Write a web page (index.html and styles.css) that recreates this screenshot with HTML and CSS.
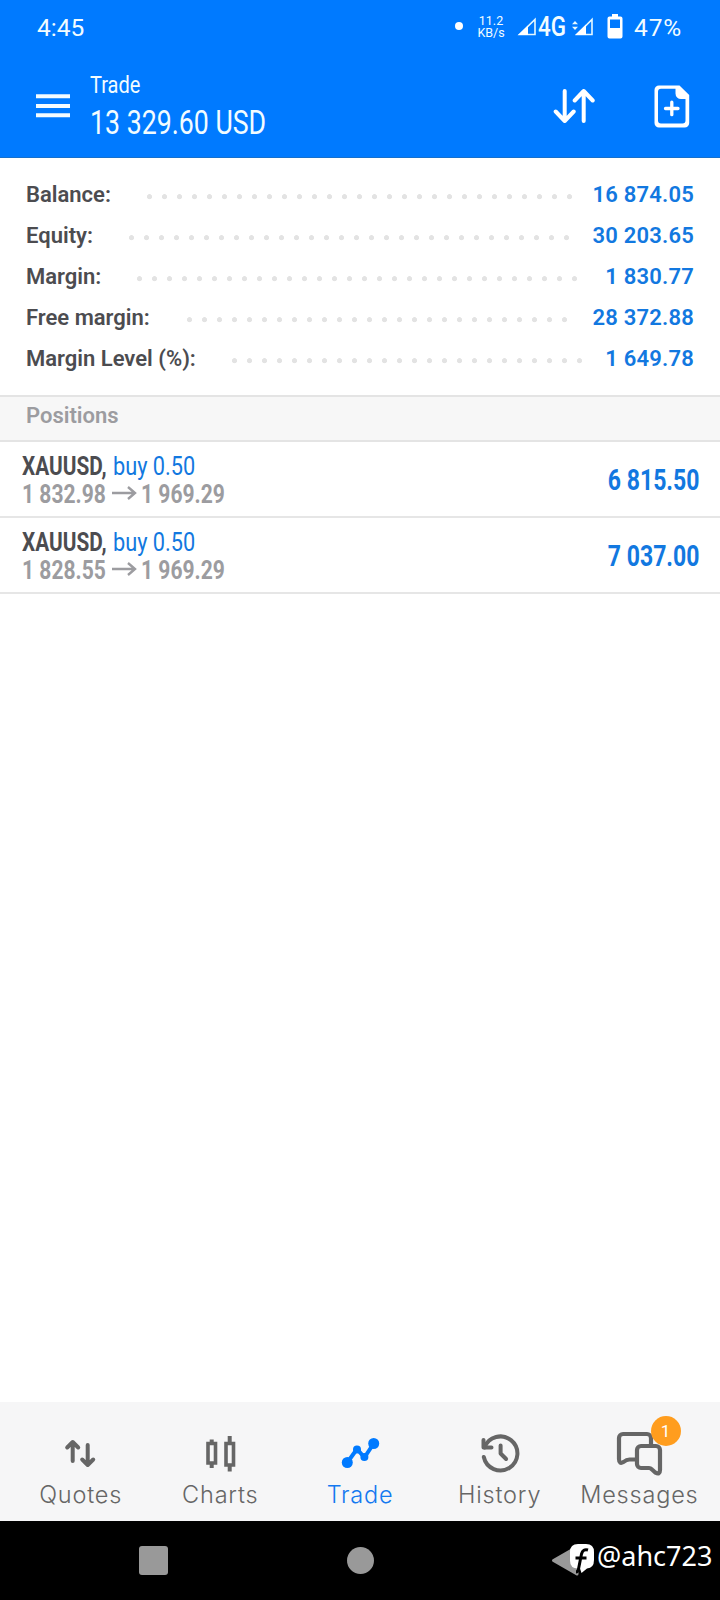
FILE: index.html
```
<!DOCTYPE html>
<html lang="en">
<head>
<meta charset="utf-8">
<title>Trade</title>
<link rel="stylesheet" href="styles.css">
</head>
<body>
<div class="screen">
  <header class="top">
    <div class="status">
      <span class="clock">4:45</span>
      <span class="dot"></span>
      <span class="rate"><span>11.2</span><span>KB/s</span></span>
      <svg class="signal" width="20" height="20" viewBox="0 0 20 20"><path d="M2.5 17.500 18 2.500v15z" fill="none" stroke="#e4f8ff" stroke-width="1.600"/><path d="M1 18 11 8.500V18z" fill="#fff"/></svg>
      <span class="net">4G</span>
      <svg class="signal2" width="22" height="20" viewBox="0 0 22 20"><path d="M0 7.300 3 4l3 3.300zM0 9.700 3 13l3-3.300z" fill="#e4f8ff"/><path d="M5 17.500 20 2.500v15z" fill="none" stroke="#e4f8ff" stroke-width="1.600"/><path d="M3 18 14 7.500V18z" fill="#fff"/></svg>
      <svg class="battery" width="16" height="25" viewBox="0 0 16 25"><path d="M5 0h6v2.500h2.500a2 2 0 0 1 2 2V22.500a2 2 0 0 1-2 2h-11a2 2 0 0 1-2-2V4.500a2 2 0 0 1 2-2H5z" fill="#fff"/><path d="M3 5.500h10v8.500H3z" fill="#007aff"/></svg>
      <span class="percent">47%</span>
    </div>
    <div class="bar">
      <svg class="menu" width="34" height="24" viewBox="0 0 34 24"><path d="M0 2.200h34M0 11.900h34M0 21.200h34" stroke="#f4fcff" stroke-width="4"/></svg>
      <div class="heading"><span class="title">Trade</span><span class="amount">13 329.60 USD</span></div>
      <svg class="sort" width="42" height="36" viewBox="0 0 42 36" fill="none" stroke="#fff" stroke-width="4" stroke-linecap="round" stroke-linejoin="round"><path d="M11.700 3v30M2.700 23.500l9 9.500 9-9.500M30.700 33V3M21.700 12.500l9-9.500 9 9.500"/></svg>
      <svg class="new-order" width="36" height="43" viewBox="0 0 36 43"><path fill-rule="evenodd" fill="#fff" d="M5 .5H25.500L35.200 10V38a4.500 4.500 0 0 1-4.500 4.500H5A4.500 4.500 0 0 1 .5 38V5A4.500 4.500 0 0 1 5 .5zM7 3.800A3 3 0 0 0 4 6.800V35.500a3 3 0 0 0 3 3H28.500a3 3 0 0 0 3-3V14H27A5.500 5.500 0 0 1 21.500 8.500V3.800z"/><path d="M17.800 17.200v12.500M11.500 23.500h12.500" stroke="#fff" stroke-width="3.300" stroke-linecap="round"/></svg>
    </div>
  </header>

  <section class="summary">
    <div class="row"><span class="label" style="width:116px">Balance:</span><span class="leader" style="width:435px"></span><span class="value">16 874.05</span></div>
    <div class="row"><span class="label" style="width:98px">Equity:</span><span class="leader" style="width:450px"></span><span class="value">30 203.65</span></div>
    <div class="row"><span class="label" style="width:106px">Margin:</span><span class="leader" style="width:450px"></span><span class="value">1 830.77</span></div>
    <div class="row"><span class="label" style="width:156px">Free margin:</span><span class="leader" style="width:390px"></span><span class="value">28 372.88</span></div>
    <div class="row"><span class="label" style="width:201px">Margin Level (%):</span><span class="leader" style="width:360px"></span><span class="value">1 649.78</span></div>
  </section>

  <h2 class="section">Positions</h2>
  <main class="positions">
    <article class="position">
      <div class="deal">
        <div class="line"><span class="symbol">XAUUSD,</span><span class="side">buy 0.50</span></div>
        <div class="line"><span class="price">1 832.98</span><svg class="arrow" width="25" height="14" viewBox="0 0 25 14"><path d="M0 7h23M16 1l7 6-7 6" fill="none" stroke="#9c9ca0" stroke-width="2.400"/></svg><span class="price">1 969.29</span></div>
      </div>
      <span class="profit">6 815.50</span>
    </article>
    <article class="position">
      <div class="deal">
        <div class="line"><span class="symbol">XAUUSD,</span><span class="side">buy 0.50</span></div>
        <div class="line"><span class="price">1 828.55</span><svg class="arrow" width="25" height="14" viewBox="0 0 25 14"><path d="M0 7h23M16 1l7 6-7 6" fill="none" stroke="#9c9ca0" stroke-width="2.400"/></svg><span class="price">1 969.29</span></div>
      </div>
      <span class="profit">7 037.00</span>
    </article>
  </main>

  <nav class="tabs">
    <a class="tab"><svg width="48" height="48" viewBox="0 0 48 48" fill="none" stroke="#666" stroke-width="4" stroke-linecap="round" stroke-linejoin="round"><path d="M15.700 33V14M10.200 19.500 15.700 14l5.500 5.500M30.700 17v19M25.200 31.500 30.700 37l5.500-5.500"/></svg><span>Quotes</span></a>
    <a class="tab"><svg width="48" height="48" viewBox="0 0 48 48" fill="none" stroke="#666"><path d="M12 15.500h7.500v19.500H12zM30 15.500h7.500v21.500H30z" stroke-width="3.600"/><path d="M15.700 11.500v4M15.700 35v5M33.700 8v8M33.700 37v6.500" stroke-width="4"/></svg><span>Charts</span></a>
    <a class="tab active"><svg width="48" height="48" viewBox="0 0 48 48" fill="#007aff"><path d="M11.300 34.500 21 21l7.400 8.500L37.700 15.500" fill="none" stroke="#007aff" stroke-width="4"/><circle cx="11.300" cy="34.500" r="5.500"/><circle cx="21" cy="21.500" r="4"/><circle cx="28.400" cy="29" r="4"/><circle cx="37.700" cy="15.500" r="5.500"/></svg><span>Trade</span></a>
    <a class="tab"><svg width="48" height="48" viewBox="0 0 48 48" fill="none" stroke="#666" stroke-width="4" stroke-linecap="round" stroke-linejoin="round"><path d="M7.800 29A17 17 0 1 0 8.500 19.500"/><path d="M7.500 12v7.500h8M24.600 17.500v8l5.500 5.500"/></svg><span>History</span></a>
    <a class="tab"><svg width="48" height="48" viewBox="0 0 48 48" fill="none" stroke="#666" stroke-width="4.200" stroke-linejoin="round"><path d="M36 17V10a4 4 0 0 0-4-4H8a4 4 0 0 0-4 4V31q0 5.500 4.500 3 3-2.500 6-2.500H21"/><path d="M26 18H41a4 4 0 0 1 4 4V42q0 5-4.500 2.700L37 41.500q-1.500-1.500-3-1.500H26a4 4 0 0 1-4-4V22a4 4 0 0 1 4-4z"/></svg><span>Messages</span><b class="badge">1</b></a>
  </nav>

  <footer class="system">
    <svg width="720" height="79" viewBox="0 0 720 79"><rect x="139" y="25" width="29" height="29" rx="3" fill="#999"/><circle cx="360.500" cy="39.500" r="13.500" fill="#999"/><path d="M553.500 39.500 577 26v27z" fill="#999" stroke="#999" stroke-width="3" stroke-linejoin="round"/><path d="M578 23h8q8 0 8 8v8q0 8-7 8.500l-5.500 4.500-1.500-4.500h-2q-8 0-8-8v-8.500q0-8 8-8z" fill="#fff"/><path d="M588 29q-5-1.500-6.500 4l-3 15q-.6 3-2.500 3M575.500 37h11" fill="none" stroke="#000" stroke-width="3"/></svg>
    <span class="handle">@ahc723</span>
  </footer>
</div>
</body>
</html>
```
FILE: styles.css
```
* { box-sizing: border-box; }
body { margin: 0; background: #fff; font-family: Roboto, "Liberation Sans", sans-serif; }
svg { display: block; flex: none; }
.screen { width: 720px; height: 1600px; display: flex; flex-direction: column; white-space: nowrap; }

.top { height: 158px; background: #007aff; color: #f2fcff; border-bottom: 1px solid #1670cc; }
.status { height: 54px; display: flex; align-items: center; padding: 0 38px 0 37px; }
.clock { font-size: 24.5px; line-height: 54px; padding-top: 1px; }
.dot { width: 8px; height: 8px; border-radius: 50%; background: #fff; margin: 0 15px 2px auto; }
.rate { width: 26px; display: flex; flex-direction: column; align-items: center; font-size: 12.5px; line-height: 12px; font-weight: 400; margin-right: 13px; }
.net { width: 29px; font-size: 27px; font-weight: 500; margin-right: 6px; }
.net, .title, .amount, .symbol, .side, .price { display: inline-block; transform-origin: left center; }
.net { transform: translateX(1px) scaleX(.83); }
.signal2 { margin-right: 13px; }
.battery { margin-right: 11px; margin-bottom: 2px; }
.percent { width: 48px; font-size: 24.5px; line-height: 54px; padding-top: 1px; letter-spacing: .9px; }

.bar { height: 104px; display: flex; padding-left: 36px; }
.menu { margin: 40px 20px 0 0; }
.heading { width: 463px; display: flex; flex-direction: column; align-items: flex-start; padding-top: 15px; }
.title { font-size: 24px; line-height: 32px; transform: scaleX(.835); }
.amount { font-size: 32.5px; line-height: 44px; transform: scaleX(.822); }
.sort { margin-top: 34px; }
.new-order { margin: 31px 0 0 59px; }

.summary { padding: 16px 26px 16px 26px; }
.row { height: 41px; line-height: 41px; display: flex; font-size: 22px; font-weight: 600; color: #4c4c50; }
.label { flex: none; }
.leader { flex: none; background: radial-gradient(circle at 7.5px 22.7px, #e3e3e3 2.2px, transparent 2.9px) 0 0 / 15px 41px repeat-x; }
.value { margin-left: auto; color: #1278e0; letter-spacing: .2px; }

.section { margin: 0; height: 47px; padding: 0 0 7px 26px; line-height: 38px; font-size: 22px; font-weight: 600; color: #9c9ca0; background: #f7f7f7; border-top: 2px solid #e4e4e4; border-bottom: 2px solid #e4e4e4; }
.position { height: 76px; display: flex; justify-content: space-between; padding: 10px 21px 0 22px; border-bottom: 2px solid #e6e6e6; }
.line { height: 28px; display: flex; align-items: center; font-size: 26px; line-height: 28px; }
.symbol { width: 91px; font-weight: 700; color: #4c4c50; transform: scaleX(.8); }
.side { color: #1278e0; transform: scaleX(.835); }
.price { width: 88px; font-weight: 700; color: #9c9ca0; transform: scaleX(.81); }
.arrow { margin: 0 4px 2px 2px; }
.profit { font-size: 29.5px; line-height: 56px; font-weight: 700; color: #1278e0; transform: scaleX(.78); transform-origin: right center; }

.tabs { margin-top: auto; height: 119px; display: grid; grid-template-columns: repeat(5, 139.700px); justify-content: center; background: #f6f6f7; color: #666; }
.tab { position: relative; display: flex; flex-direction: column; align-items: center; padding-top: 26px; font: 300 23.500px/38px Inter, sans-serif; letter-spacing: .8px; }
.active { color: #1479f0; }
.badge { position: absolute; left: 81px; top: 14px; width: 30px; height: 30px; border-radius: 50%; background: #ff9d1e; color: #fff; font: 400 17px/31px Roboto, sans-serif; letter-spacing: 0; text-align: center; }

.system { position: relative; height: 79px; background: #000; }
.handle { position: absolute; left: 597px; top: 17px; color: #fff; font: 400 27px/36px "Noto Sans", sans-serif; }
```
